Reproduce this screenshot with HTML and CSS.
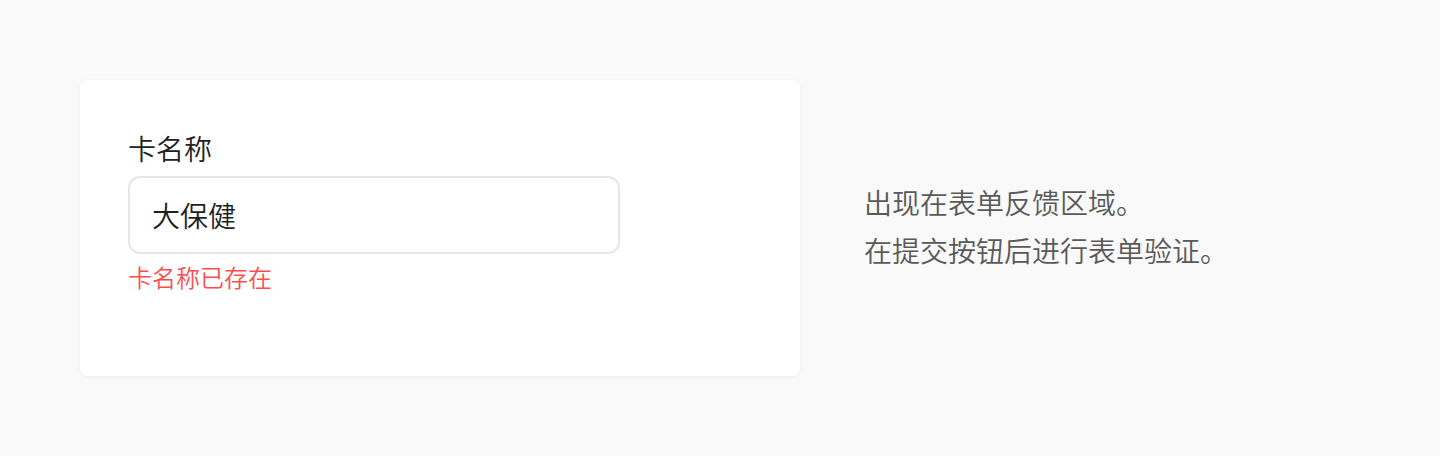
FILE: index.html
```html
<!DOCTYPE html>
<html lang="zh-CN">
<head>
<meta charset="utf-8">
<link rel="stylesheet" href="styles.css">
</head>
<body>
<div class="page">
  <div class="card">
    <div class="field">
      <label class="label">卡名称</label>
      <div class="input">大保健</div>
      <div class="error">卡名称已存在</div>
    </div>
  </div>
  <div class="desc">
    <p>出现在表单反馈区域。</p>
    <p>在提交按钮后进行表单验证。</p>
  </div>
</div>
</body>
</html>
```
FILE: styles.css
```css
html, body {
  margin: 0;
  padding: 0;
  background: #f9f9f9;
  font-family: "Noto Sans CJK SC", "Noto Sans", sans-serif;
}
.page {
  display: flex;
  align-items: center;
  gap: 64px;
  padding: 80px;
  height: 456px;
  box-sizing: border-box;
}
.card {
  width: 720px;
  height: 296px;
  box-sizing: border-box;
  background: #fff;
  border-radius: 8px;
  box-shadow: 0 1px 4px rgba(0,0,0,0.06);
  padding: 48px;
}
.field {
  display: flex;
  flex-direction: column;
  align-items: flex-start;
}
.label {
  font-size: 28px;
  line-height: 40px;
  color: #222;
  margin-bottom: 8px;
  font-weight: 350;
}
.input {
  width: 492px;
  height: 78px;
  box-sizing: border-box;
  border: 2px solid #e6e6e6;
  border-radius: 12px;
  padding: 0 22px;
  display: flex;
  align-items: center;
  font-size: 28px;
  color: #1f1f1f;
  font-weight: 350;
}
.error {
  margin-top: 5px;
  font-size: 24px;
  line-height: 36px;
  color: #ff4d4f;
  font-weight: 350;
}
.desc {
  color: #595959;
  font-size: 28px;
  line-height: 48px;
  padding-bottom: 5px;
  font-weight: 350;
}
.desc p {
  margin: 0;
}
```
